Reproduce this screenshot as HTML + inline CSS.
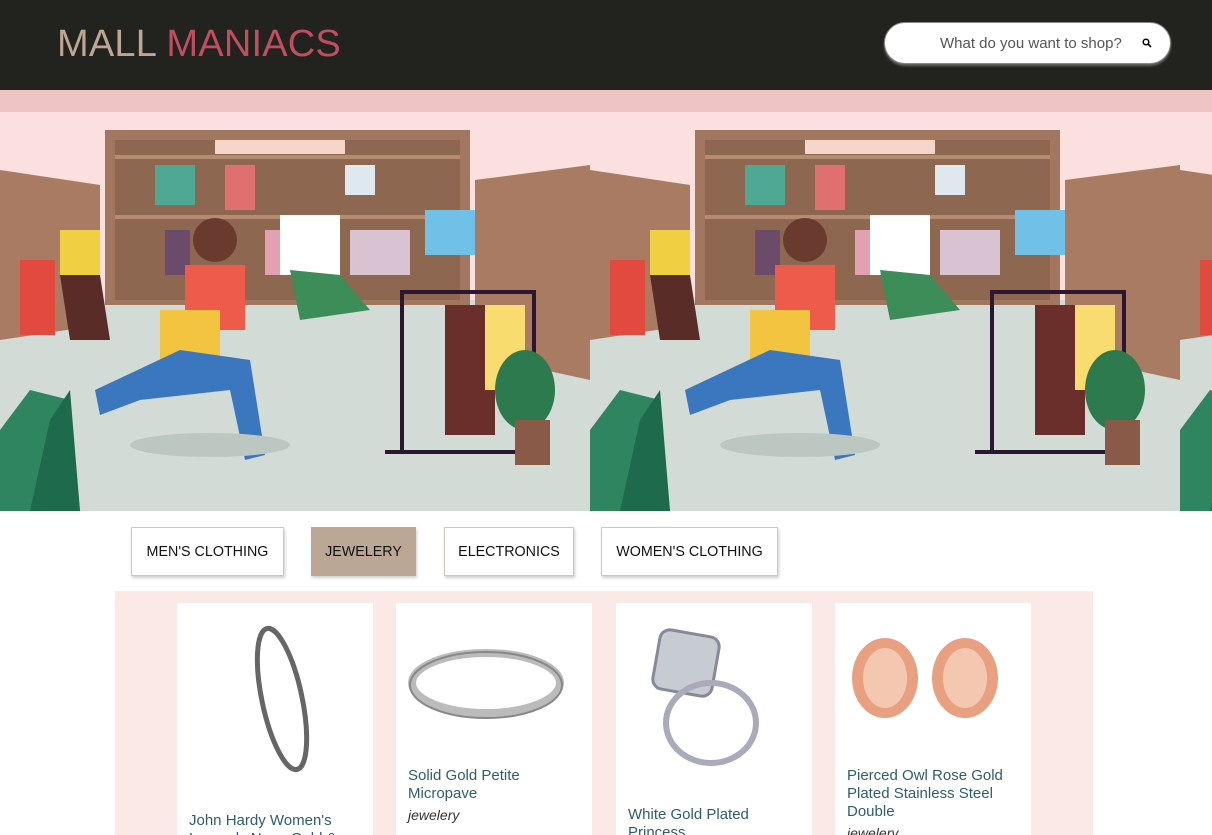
<!DOCTYPE html>
<html><head><style>
*{margin:0;padding:0;box-sizing:border-box}
html,body{width:1212px;height:835px;overflow:hidden}
body{background:#fff;font-family:"Liberation Sans",sans-serif;position:relative}
.hdr{height:90px;background:#22221e;position:relative}
.logo{position:absolute;left:57px;top:23px;font-size:38px;color:#bba793;letter-spacing:0.2px}
.logo span{color:#c04d60}
.search{position:absolute;left:884px;top:22px;width:287px;height:42px;background:#fff;border-radius:21px;border:1px solid #888;box-shadow:0 2px 2px #666;font-size:15px;color:#555}
.search .t{position:absolute;left:55px;top:12px}
.search svg{position:absolute;left:257px;top:15px}
.hero{position:absolute;top:90px;left:0;width:1212px;height:421px;overflow:hidden}
.btn{position:absolute;top:527px;height:49px;border:1px solid #d0c6bb;box-shadow:1px 2px 3px rgba(0,0,0,.2);background:#fff;font-size:14.3px;color:#111;text-align:center;line-height:49px}
.area{position:absolute;left:115px;top:591px;width:978px;height:244px;background:#fbe9e6}
.card{position:absolute;top:603px;width:196px;height:240px;background:#fff}
.card .n{position:absolute;left:12px;font-size:15px;color:#2e5e6c;line-height:18px;width:175px}
.card .c{position:absolute;left:12px;font-size:14px;font-style:italic;color:#333}
.card .p{position:absolute;left:12px;font-size:14px;color:#111}
</style></head><body>
<div class="hdr">
<div class="logo">MALL <span>MANIACS</span></div>
<div class="search"><span class="t">What do you want to shop?</span><svg width="10" height="10" viewBox="0 0 10 10"><circle cx="4" cy="4" r="2.8" fill="none" stroke="#000" stroke-width="1.5"/><path d="M6 6L9 9" stroke="#000" stroke-width="1.6"/></svg></div>
</div>
<div class="hero">
<svg width="1212" height="421" viewBox="0 0 1212 421">
<defs>
<g id="sc">
<rect x="0" y="0" width="590" height="421" fill="#fbe0df"/>
<rect x="0" y="0" width="590" height="22" fill="#efc4c4"/>
<rect x="0" y="210" width="590" height="211" fill="#d3dbd6"/>
<rect x="105" y="40" width="365" height="175" fill="#a17760"/>
<rect x="115" y="50" width="345" height="160" fill="#8e6751"/>
<rect x="115" y="65" width="345" height="4" fill="#b58b72"/>
<rect x="115" y="125" width="345" height="4" fill="#b58b72"/>
<rect x="215" y="50" width="130" height="14" fill="#f6d6c8"/>
<polygon points="0,80 100,95 100,235 0,250" fill="#a87b62"/>
<polygon points="475,90 590,75 590,290 475,265" fill="#a87b62"/>
<rect x="155" y="75" width="40" height="40" fill="#4fa893"/>
<rect x="225" y="75" width="30" height="45" fill="#e07070"/>
<rect x="345" y="75" width="30" height="30" fill="#dfe7ef"/>
<rect x="165" y="140" width="25" height="45" fill="#6c4a6a"/>
<rect x="265" y="140" width="25" height="45" fill="#e2a0b0"/>
<rect x="350" y="140" width="60" height="45" fill="#d9c2d2"/>
<rect x="20" y="170" width="35" height="75" fill="#e24a40"/>
<circle cx="215" cy="150" r="22" fill="#6b3a2e"/>
<rect x="185" y="175" width="60" height="65" fill="#ef5b4b"/>
<rect x="160" y="220" width="60" height="50" fill="#f2c440"/>
<polygon points="180,260 250,270 265,365 245,370 230,300 140,310 100,325 95,300" fill="#3a77bf"/>
<rect x="280" y="125" width="60" height="60" fill="#fff"/>
<polygon points="290,180 340,185 370,220 300,230" fill="#3c8d57"/>
<rect x="425" y="120" width="50" height="45" fill="#70c0e8"/>
<rect x="60" y="140" width="40" height="45" fill="#f0d040"/>
<polygon points="60,185 100,185 110,250 70,250" fill="#5a2c28"/>
<rect x="400" y="200" width="135" height="4" fill="#2b1830"/>
<rect x="400" y="200" width="4" height="160" fill="#2b1830"/>
<rect x="532" y="200" width="4" height="160" fill="#2b1830"/>
<rect x="385" y="360" width="165" height="4" fill="#2b1830"/>
<rect x="445" y="215" width="50" height="130" fill="#6b2f2b"/>
<rect x="485" y="215" width="40" height="85" fill="#f8dc70"/>
<ellipse cx="525" cy="300" rx="30" ry="40" fill="#2e7a4f"/>
<rect x="515" y="330" width="35" height="45" fill="#8a5a48"/>
<polygon points="0,421 0,340 30,300 70,310 80,421" fill="#2e8560"/>
<polygon points="30,421 50,330 70,300 80,421" fill="#1e6a4c"/>
<ellipse cx="210" cy="355" rx="80" ry="12" fill="#bcc7c1"/>
</g>
</defs>
<use href="#sc" x="0"/>
<use href="#sc" x="590"/>
<use href="#sc" x="1180"/>
</svg>
</div>
<div class="btn" style="left:131px;width:153px">MEN'S CLOTHING</div>
<div class="btn" style="left:311px;width:105px;background:#bba793;border-color:#bba793">JEWELERY</div>
<div class="btn" style="left:444px;width:130px">ELECTRONICS</div>
<div class="btn" style="left:601px;width:177px">WOMEN'S CLOTHING</div>
<div class="area"></div>
<div class="card" style="left:177px">
<svg style="position:absolute;left:40px;top:18px" width="120" height="160"><ellipse cx="65" cy="78" rx="20" ry="72" fill="none" stroke="#666" stroke-width="5" transform="rotate(-12 65 78)"/></svg>
<div class="n" style="top:209px">John Hardy Women's Legends Naga Gold &amp;</div></div>
<div class="card" style="left:396px">
<svg style="position:absolute;left:10px;top:40px" width="160" height="90"><ellipse cx="80" cy="40" rx="74" ry="30" fill="none" stroke="#bbb" stroke-width="8"/><ellipse cx="80" cy="42" rx="76" ry="33" fill="none" stroke="#888" stroke-width="2"/></svg>
<div class="n" style="top:164px">Solid Gold Petite Micropave</div>
<div class="c" style="top:204px">jewelery</div>
<div class="p" style="top:229px">$ 168</div></div>
<div class="card" style="left:616px">
<svg style="position:absolute;left:25px;top:20px" width="130" height="150"><rect x="15" y="10" width="60" height="60" rx="10" fill="#c7ccd3" stroke="#889" stroke-width="3" transform="rotate(10 45 40)"/><ellipse cx="70" cy="100" rx="45" ry="40" fill="none" stroke="#aab" stroke-width="6"/></svg>
<div class="n" style="top:203px">White Gold Plated Princess</div></div>
<div class="card" style="left:835px">
<svg style="position:absolute;left:10px;top:30px" width="180" height="90"><ellipse cx="40" cy="45" rx="33" ry="40" fill="#e8a080"/><ellipse cx="40" cy="45" rx="22" ry="30" fill="#f4c8b0"/><ellipse cx="120" cy="45" rx="33" ry="40" fill="#e8a080"/><ellipse cx="120" cy="45" rx="22" ry="30" fill="#f4c8b0"/></svg>
<div class="n" style="top:164px">Pierced Owl Rose Gold Plated Stainless Steel Double</div>
<div class="c" style="top:222px">jewelery</div></div>
</body></html>
